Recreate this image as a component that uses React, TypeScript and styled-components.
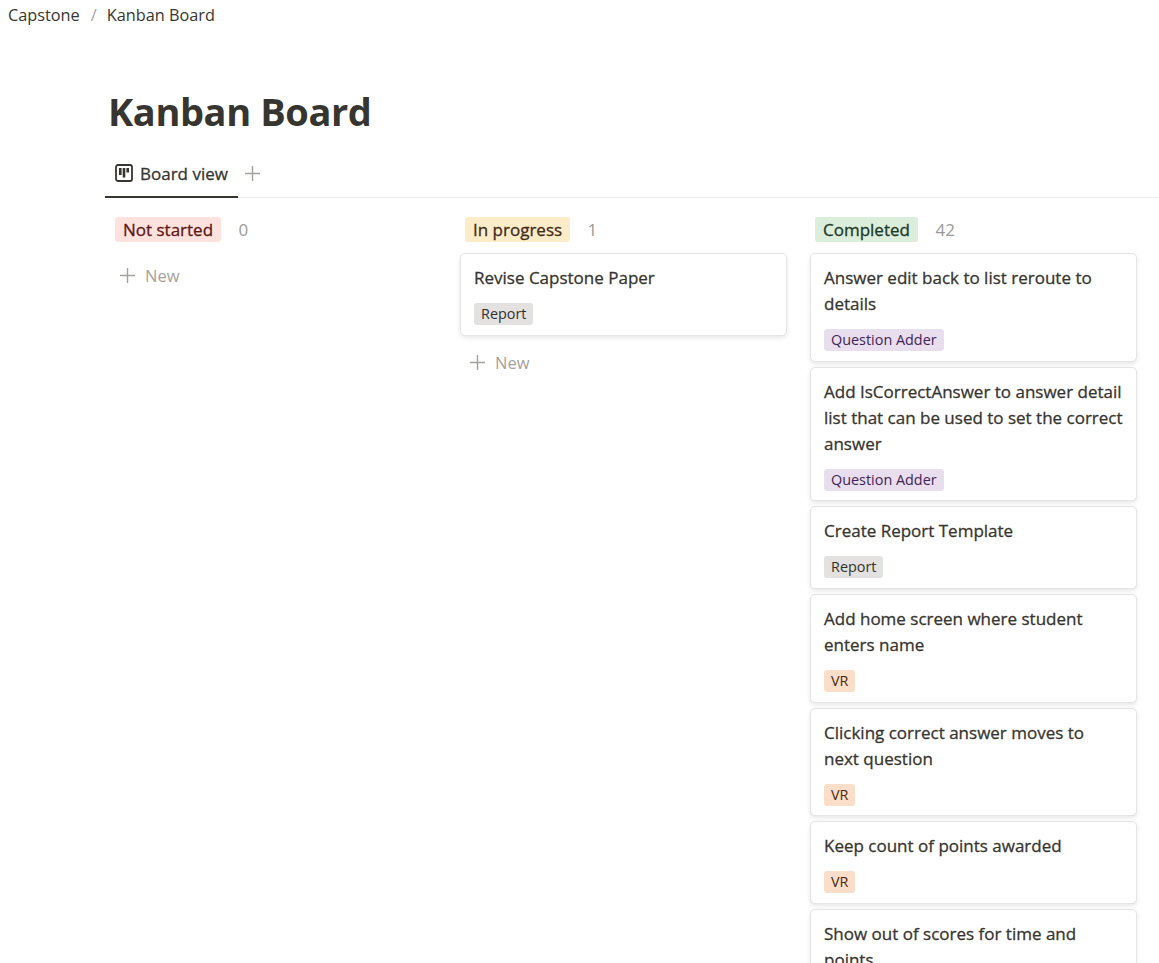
import styled, { createGlobalStyle } from 'styled-components'

const GlobalStyle = createGlobalStyle`
  html, body {
    margin: 0;
    height: 963px;
    overflow: hidden;
    background: #fff;
    font-family: "Open Sans", "Noto Sans", sans-serif;
    color: #37352f;
  }
`

type Tone = 'gray' | 'purple' | 'orange'
type CardData = { title: string; tag: string; tone: Tone }

const tagColors: Record<Tone, { bg: string; fg: string }> = {
  gray: { bg: '#e3e2e0', fg: '#32302c' },
  purple: { bg: '#e8deee', fg: '#412454' },
  orange: { bg: '#fadec9', fg: '#49290e' },
}

const statusColors = {
  red: { bg: '#ffe2dd', fg: '#5d1715' },
  yellow: { bg: '#fdecc8', fg: '#402c1b' },
  green: { bg: '#dbeddb', fg: '#1c3829' },
}

const completed: CardData[] = [
  { title: 'Answer edit back to list reroute to details', tag: 'Question Adder', tone: 'purple' },
  { title: 'Add IsCorrectAnswer to answer detail list that can be used to set the correct answer', tag: 'Question Adder', tone: 'purple' },
  { title: 'Create Report Template', tag: 'Report', tone: 'gray' },
  { title: 'Add home screen where student enters name', tag: 'VR', tone: 'orange' },
  { title: 'Clicking correct answer moves to next question', tag: 'VR', tone: 'orange' },
  { title: 'Keep count of points awarded', tag: 'VR', tone: 'orange' },
  { title: 'Show out of scores for time and points', tag: 'VR', tone: 'orange' },
]

function BoardIcon() {
  return (
    <svg width="18" height="18" viewBox="0 0 18 18" fill="none">
      <rect x="1" y="1" width="16" height="16" rx="2" stroke="#37352f" strokeWidth="1.8" />
      <rect x="4" y="4" width="2.6" height="7" fill="#37352f" />
      <rect x="7.7" y="4" width="2.6" height="9.5" fill="#37352f" />
      <rect x="11.4" y="4" width="2.6" height="4.5" fill="#37352f" />
    </svg>
  )
}

function PlusIcon() {
  return (
    <svg width="15" height="15" viewBox="0 0 15 15">
      <path d="M7.5 0 V15 M0 7.5 H15" stroke="#a5a29c" strokeWidth="1.4" />
    </svg>
  )
}

function Card({ title, tag, tone }: CardData) {
  return (
    <CardBox>
      <CardTitle>{title}</CardTitle>
      <Tag $tone={tone}>{tag}</Tag>
    </CardBox>
  )
}

function NewRow() {
  return (
    <NewButton>
      <PlusIcon />
      New
    </NewButton>
  )
}

export default function App() {
  return (
    <Page>
      <GlobalStyle />
      <Breadcrumb>
        <span>Capstone</span>
        <Slash>/</Slash>
        <span>Kanban Board</span>
      </Breadcrumb>

      <Content>
        <Title>Kanban Board</Title>
        <Tabs>
          <ActiveTab>
            <BoardIcon />
            Board view
          </ActiveTab>
          <AddView>
            <PlusIcon />
          </AddView>
        </Tabs>

        <Board>
          <Column>
            <ColumnHead>
              <Status $color="red">Not started</Status>
              <Count>0</Count>
            </ColumnHead>
            <NewRow />
          </Column>

          <Column>
            <ColumnHead>
              <Status $color="yellow">In progress</Status>
              <Count>1</Count>
            </ColumnHead>
            <Card title="Revise Capstone Paper" tag="Report" tone="gray" />
            <NewRow />
          </Column>

          <Column>
            <ColumnHead>
              <Status $color="green">Completed</Status>
              <Count>42</Count>
            </ColumnHead>
            {completed.map((c) => (
              <Card key={c.title} {...c} />
            ))}
          </Column>
        </Board>
      </Content>
    </Page>
  )
}

const Page = styled.div`
  height: 963px;
  overflow: hidden;
`

const Breadcrumb = styled.div`
  display: flex;
  align-items: center;
  height: 30px;
  padding-left: 8px;
  font-size: 16.3px;
  color: #37352f;
`

const Slash = styled.span`
  margin: 0 10px 0 11px;
  color: #a5a29c;
`

const Content = styled.div`
  padding-left: 105px;
`

const Title = styled.h1`
  margin: 0;
  padding: 53px 0 0 3px;
  height: 72px;
  font-size: 38px;
  line-height: 56px;
  font-weight: 700;
  letter-spacing: -0.4px;
  color: #37352f;
`

const Tabs = styled.div`
  display: flex;
  height: 42px;
  border-bottom: 1px solid #e9e9e7;
`

const ActiveTab = styled.div`
  display: flex;
  align-items: center;
  gap: 7px;
  width: 133px;
  box-sizing: border-box;
  padding: 0 0 5px 10px;
  margin-bottom: -1px;
  border-bottom: 2px solid #37352f;
  font-size: 17px;
  font-weight: 500;
  -webkit-text-stroke: 0.3px currentColor;
`

const AddView = styled.div`
  display: flex;
  align-items: center;
  padding: 0 0 6px 7px;
`

const Board = styled.div`
  display: grid;
  grid-template-columns: repeat(3, 327px);
  gap: 23px;
  padding: 15px 0 0 5px;
`

const Column = styled.div`
  display: flex;
  flex-direction: column;
  gap: 5px;
`

const ColumnHead = styled.div`
  display: flex;
  align-items: center;
  gap: 17.5px;
  height: 32px;
  margin-bottom: 3px;
  padding-left: 5px;
`

const Status = styled.span<{ $color: keyof typeof statusColors }>`
  height: 25px;
  line-height: 25px;
  padding: 0 8px;
  border-radius: 3px;
  font-size: 17px;
  font-weight: 500;
  -webkit-text-stroke: 0.3px currentColor;
  background: ${(p) => statusColors[p.$color].bg};
  color: ${(p) => statusColors[p.$color].fg};
`

const Count = styled.span`
  font-size: 17px;
  color: #9b9a97;
`

const CardBox = styled.div`
  display: flex;
  flex-direction: column;
  align-items: flex-start;
  flex-shrink: 0;
  box-sizing: border-box;
  gap: 12px;
  padding: 11px 13px 9.67px;
  border: 1px solid #e4e4e3;
  border-radius: 5px;
  background: #fff;
  box-shadow: rgba(15, 15, 15, 0.1) 0 2px 4px;
`

const CardTitle = styled.div`
  font-size: 17px;
  line-height: 26px;
  font-weight: 500;
  -webkit-text-stroke: 0.3px currentColor;
  color: #37352f;
`

const Tag = styled.span<{ $tone: Tone }>`
  height: 22px;
  line-height: 22px;
  padding: 0 7px;
  border-radius: 3px;
  font-size: 14.4px;
  background: ${(p) => tagColors[p.$tone].bg};
  color: ${(p) => tagColors[p.$tone].fg};
`

const NewButton = styled.div`
  display: flex;
  align-items: center;
  gap: 10px;
  height: 32px;
  margin-top: 6px;
  padding-left: 10px;
  font-size: 16.5px;
  color: #a5a29c;
`
